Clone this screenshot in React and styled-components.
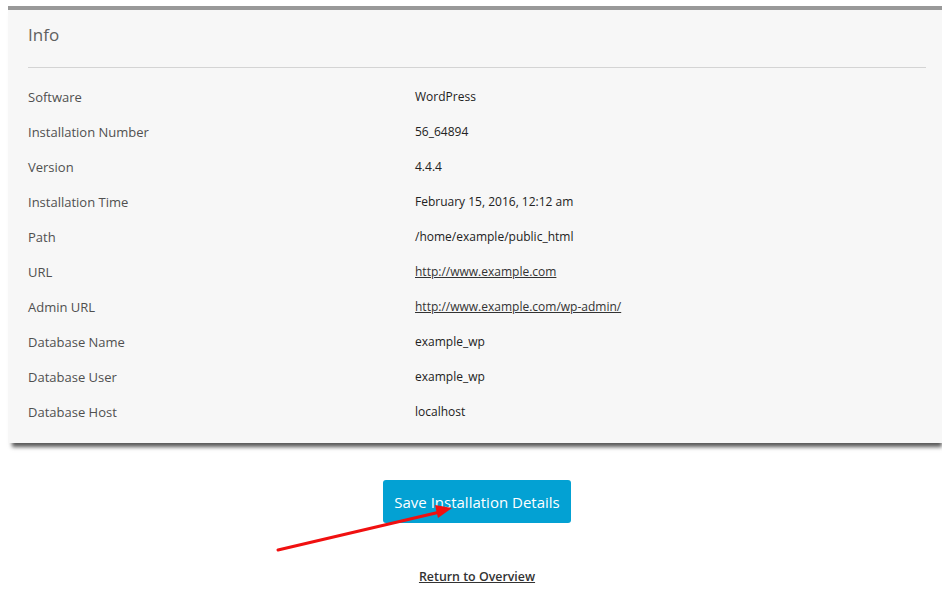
import React from "react";
import styled, { createGlobalStyle } from "styled-components";

const GlobalStyle = createGlobalStyle`
  html, body {
    margin: 0;
    padding: 0;
    background: #ffffff;
    font-family: "Open Sans", "Noto Sans", sans-serif;
  }
`;

const rows = [
  { label: "Software", value: "WordPress" },
  { label: "Installation Number", value: "56_64894" },
  { label: "Version", value: "4.4.4" },
  { label: "Installation Time", value: "February 15, 2016, 12:12 am" },
  { label: "Path", value: "/home/example/public_html" },
  { label: "URL", value: "http://www.example.com", link: true },
  { label: "Admin URL", value: "http://www.example.com/wp-admin/", link: true },
  { label: "Database Name", value: "example_wp" },
  { label: "Database User", value: "example_wp" },
  { label: "Database Host", value: "localhost" },
];

const App = () => {
  return (
    <Page>
      <GlobalStyle />
      <Panel>
        <Heading>Info</Heading>
        <Divider />
        <Table>
          {rows.map((row) => (
            <Row key={row.label}>
              <Label>{row.label}</Label>
              <Value>
                {row.link ? <ValueLink href="#">{row.value}</ValueLink> : row.value}
              </Value>
            </Row>
          ))}
        </Table>
      </Panel>
      <Actions>
        <SaveButton type="button">Save Installation Details</SaveButton>
        <ReturnLink href="#">Return to Overview</ReturnLink>
      </Actions>
      <Arrow width="942" height="613" viewBox="0 0 942 613">
        <line x1="278" y1="550" x2="440" y2="512" stroke="#f01010" strokeWidth="3" strokeLinecap="round" />
        <polygon points="452,508 435,505 438,518" fill="#f01010" />
      </Arrow>
    </Page>
  );
};

const Page = styled.div`
  position: relative;
  width: 942px;
  height: 613px;
  padding-top: 6px;
  box-sizing: border-box;
`;

const Panel = styled.div`
  margin: 0 0 0 8px;
  background: #f7f7f7;
  border-top: 4px solid #999999;
  padding: 13px 16px 14px 20px;
  box-shadow: 2px 6px 4px -2px rgba(0, 0, 0, 0.65);
`;

const Heading = styled.h2`
  margin: 0;
  font-size: 17px;
  line-height: 24px;
  font-weight: 400;
  color: #606060;
`;

const Divider = styled.hr`
  margin: 20px 0 0;
  border: none;
  border-top: 1px solid #d4d4d4;
`;

const Table = styled.div`
  padding-top: 11px;
`;

const Row = styled.div`
  display: grid;
  grid-template-columns: 387px 1fr;
  align-items: center;
  height: 35px;
`;

const Label = styled.div`
  font-size: 13px;
  color: #505050;
`;

const Value = styled.div`
  font-size: 12px;
  color: #222222;
`;

const ValueLink = styled.a`
  color: #333333;
  text-decoration: underline;
`;

const Actions = styled.div`
  display: flex;
  flex-direction: column;
  align-items: center;
  padding: 37px 0 0 12px;
`;

const SaveButton = styled.button`
  background: #03a1d3;
  color: #ffffff;
  border: none;
  border-radius: 3px;
  height: 43px;
  padding: 0 11px;
  font-family: "Open Sans", "Noto Sans", sans-serif;
  font-size: 15px;
`;

const ReturnLink = styled.a`
  margin-top: 45px;
  font-size: 12.4px;
  font-weight: 600;
  color: #333333;
  text-decoration: underline;
`;

const Arrow = styled.svg`
  position: absolute;
  left: 0;
  top: 0;
  pointer-events: none;
`;

export default App;
